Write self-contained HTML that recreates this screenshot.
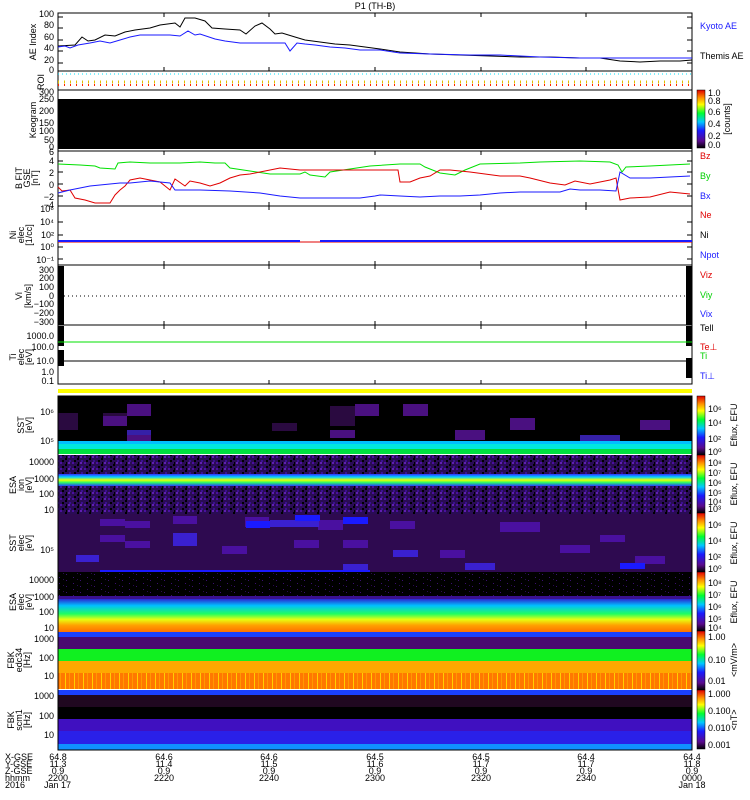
<!DOCTYPE html>
<html><head><meta charset="utf-8"><style>
html,body{margin:0;padding:0;background:#fff;}
svg{display:block;font-family:"Liberation Sans",sans-serif;}
text{font-size:9px;}
</style></head><body>
<svg width="750" height="800" viewBox="0 0 750 800" xmlns="http://www.w3.org/2000/svg">
<defs>
<linearGradient id="cb" x1="0" y1="1" x2="0" y2="0">
<stop offset="0" stop-color="#000"/><stop offset="0.12" stop-color="#5a0a8c"/><stop offset="0.3" stop-color="#1a1aff"/><stop offset="0.45" stop-color="#00c8ff"/><stop offset="0.6" stop-color="#00ff30"/><stop offset="0.75" stop-color="#ffff00"/><stop offset="0.87" stop-color="#ff8c00"/><stop offset="1" stop-color="#e00000"/>
</linearGradient>
<linearGradient id="esa2" x1="0" y1="0" x2="0" y2="1">
<stop offset="0" stop-color="#2a2ad0"/><stop offset="0.2" stop-color="#00c0ff"/><stop offset="0.45" stop-color="#20ff60"/><stop offset="0.62" stop-color="#e8ff10"/><stop offset="0.8" stop-color="#ffa000"/><stop offset="1" stop-color="#ff7000"/>
</linearGradient>
<linearGradient id="esa1" x1="0" y1="0" x2="0" y2="1">
<stop offset="0" stop-color="#3030ff"/><stop offset="0.25" stop-color="#00d0ff"/><stop offset="0.5" stop-color="#f0ff00"/><stop offset="0.7" stop-color="#30ff60"/><stop offset="1" stop-color="#2040ff"/>
</linearGradient>
<pattern id="noise" width="12" height="6" patternUnits="userSpaceOnUse">
<rect width="12" height="6" fill="#2a0c55"/><rect x="0" y="0" width="2" height="2" fill="#4a10a0"/><rect x="5" y="2" width="2" height="2" fill="#000"/><rect x="8" y="0" width="2" height="2" fill="#6020b0"/><rect x="2" y="4" width="2" height="2" fill="#000"/><rect x="9" y="4" width="2" height="2" fill="#3a1090"/><rect x="6" y="0" width="1" height="2" fill="#000"/>
</pattern>
<pattern id="noise2" width="14" height="6" patternUnits="userSpaceOnUse">
<rect width="14" height="6" fill="#000"/><rect x="3" y="1" width="1" height="1" fill="#3a1070"/><rect x="10" y="4" width="1" height="1" fill="#3a1070"/><rect x="7" y="3" width="1" height="1" fill="#2a0a50"/>
</pattern>
<pattern id="fbk" width="9" height="10" patternUnits="userSpaceOnUse">
<rect width="9" height="10" fill="#ff7800"/><rect x="2" width="1" height="10" fill="#ffd000"/><rect x="6" width="1" height="10" fill="#ff9a00"/>
</pattern>
</defs>

<text x="375" y="9" text-anchor="middle" font-size="10">P1  (TH-B)</text>

<!-- AE panel -->
<rect x="58" y="13" width="634" height="58" fill="#fff" stroke="#000"/>
<polyline fill="none" stroke="#000" points="58,46 75,45 82,37 88,41 95,40 105,35 115,36 125,32 135,30 150,28 160,25 175,23 180,27 185,18 195,18 205,21 212,28 225,29 240,30 246,34 255,26 262,23 270,29 275,34 282,33 295,37 305,40 320,42 335,44 350,45 365,47 380,49 400,52 430,54 460,55 490,56 520,57 550,57 580,58 600,58 620,61 640,62 660,61 680,61 692,60"/>
<polyline fill="none" stroke="#1a1aff" points="58,47 65,46 70,48 78,45 90,43 100,41 110,43 120,40 130,37 140,35 155,35 170,35 180,36 188,31 195,35 200,34 215,39 225,41 240,43 255,43 270,43 285,43 290,51 297,43 305,44 315,45 330,47 345,48 360,50 380,50 400,53 430,54 470,55 500,55 540,57 580,58 620,58 660,58 692,58"/>
<text x="54" y="17" text-anchor="end">100</text><text x="54" y="28" text-anchor="end">80</text><text x="54" y="40" text-anchor="end">60</text><text x="54" y="51" text-anchor="end">40</text><text x="54" y="63" text-anchor="end">20</text><text x="54" y="73" text-anchor="end">0</text>
<text transform="translate(36,42) rotate(-90)" text-anchor="middle">AE Index</text>
<text x="700" y="29" fill="#1a1aff">Kyoto AE</text>
<text x="700" y="59">Themis AE</text>

<!-- ROI -->
<rect x="58" y="71" width="634" height="19" fill="#fff" stroke="#000"/>
<line x1="58" y1="74" x2="692" y2="74" stroke="#00e0ff" stroke-dasharray="1,3"/>
<line x1="58" y1="82" x2="692" y2="82" stroke="#e0c000" stroke-width="3" stroke-dasharray="1,5"/>
<line x1="58" y1="85" x2="692" y2="85" stroke="#ff2000" stroke-width="2" stroke-dasharray="1,5"/>
<text transform="translate(44,82) rotate(-90)" text-anchor="middle">ROI</text>

<!-- Keogram -->
<rect x="58" y="90" width="634" height="61" fill="#fff" stroke="#000"/>
<rect x="58" y="99" width="634" height="50" fill="#000"/>
<text x="54" y="95" text-anchor="end">300</text><text x="54" y="102" text-anchor="end">250</text><text x="54" y="114" text-anchor="end">200</text><text x="54" y="126" text-anchor="end">150</text><text x="54" y="134" text-anchor="end">100</text><text x="54" y="143" text-anchor="end">50</text><text x="54" y="150" text-anchor="end">0</text>
<text transform="translate(36,120) rotate(-90)" text-anchor="middle">Keogram</text>
<rect x="697" y="90" width="8" height="58" fill="url(#cb)" stroke="#000" stroke-width="0.5"/>
<text x="708" y="96">1.0</text><text x="708" y="104">0.8</text><text x="708" y="115">0.6</text><text x="708" y="127">0.4</text><text x="708" y="139">0.2</text><text x="708" y="148">0.0</text>
<text transform="translate(730,119) rotate(-90)" text-anchor="middle" font-size="8">[counts]</text>

<!-- B panel -->
<rect x="58" y="151" width="634" height="55" fill="#fff" stroke="#000"/>
<polyline fill="none" stroke="#00e000" points="58,164 80,165 95,166 100,168 115,169 118,163 130,162 150,163 180,163 200,162 215,163 225,163 230,168 270,174 300,174 305,172 310,175 325,177 330,172 370,166 400,164 420,164 425,167 430,169 440,173 455,175 465,170 480,164 520,163 540,162 580,161 610,162 618,165 622,172 626,167 650,166 690,164"/>
<polyline fill="none" stroke="#e00000" points="58,187 62,191 70,190 75,198 85,200 95,203 110,203 115,195 120,190 125,186 130,180 140,178 150,180 160,182 170,190 175,179 185,186 190,181 200,183 210,186 220,183 230,178 240,175 250,174 260,172 280,168 300,170 320,170 340,170 360,170 375,170 398,170 400,182 410,182 420,178 430,176 440,170 450,170 470,172 500,176 520,176 530,178 550,183 565,185 575,181 590,184 600,182 610,180 616,178 620,200 630,198 650,197 670,192 690,194"/>
<polyline fill="none" stroke="#1a1aff" points="58,193 70,190 90,186 100,185 110,184 120,183 130,183 150,181 170,183 175,190 185,190 200,190 230,191 260,193 280,196 300,198 320,198 340,198 360,198 375,196 380,195 400,196 420,197 440,196 460,196 480,195 500,193 520,192 540,192 560,192 570,189 580,190 600,190 616,191 620,172 630,178 650,178 670,177 690,176"/>
<text x="54" y="155" text-anchor="end">6</text><text x="54" y="164" text-anchor="end">4</text><text x="54" y="176" text-anchor="end">2</text><text x="54" y="188" text-anchor="end">0</text><text x="54" y="200" text-anchor="end">−2</text><text x="54" y="208" text-anchor="end">−4</text>
<text transform="translate(22,178) rotate(-90)" text-anchor="middle" font-size="8">B FIT</text>
<text transform="translate(30,178) rotate(-90)" text-anchor="middle" font-size="8">GSE</text>
<text transform="translate(38,178) rotate(-90)" text-anchor="middle" font-size="8">[nT]</text>
<text x="700" y="159" fill="#e00000">Bz</text><text x="700" y="179" fill="#00d000">By</text><text x="700" y="199" fill="#1a1aff">Bx</text>

<!-- Ni panel -->
<rect x="58" y="206" width="634" height="59" fill="#fff" stroke="#000"/>
<line x1="58" y1="242" x2="692" y2="242" stroke="#e00000"/>
<line x1="58" y1="241" x2="300" y2="241" stroke="#1a1aff" stroke-width="2"/>
<line x1="320" y1="241" x2="692" y2="241" stroke="#1a1aff" stroke-width="2"/>
<text x="54" y="212" text-anchor="end">10⁶</text><text x="54" y="225" text-anchor="end">10⁴</text><text x="54" y="238" text-anchor="end">10²</text><text x="54" y="250" text-anchor="end">10⁰</text><text x="54" y="263" text-anchor="end">10⁻¹</text>
<text transform="translate(16,235) rotate(-90)" text-anchor="middle" font-size="8">Ni</text>
<text transform="translate(24,235) rotate(-90)" text-anchor="middle" font-size="8">elec</text>
<text transform="translate(32,235) rotate(-90)" text-anchor="middle" font-size="8">[1/cc]</text>
<text x="700" y="218" fill="#e00000">Ne</text><text x="700" y="238">Ni</text><text x="700" y="258" fill="#1a1aff">Npot</text>

<!-- Vi panel -->
<rect x="58" y="265" width="634" height="60" fill="#fff" stroke="#000"/>
<rect x="58" y="266" width="6" height="59" fill="#000"/>
<rect x="686" y="266" width="6" height="59" fill="#000"/>
<line x1="64" y1="296" x2="686" y2="296" stroke="#000" stroke-dasharray="1,3"/>
<text x="54" y="273" text-anchor="end">300</text><text x="54" y="281" text-anchor="end">200</text><text x="54" y="290" text-anchor="end">100</text><text x="54" y="299" text-anchor="end">0</text><text x="54" y="307" text-anchor="end">−100</text><text x="54" y="316" text-anchor="end">−200</text><text x="54" y="325" text-anchor="end">−300</text>
<text transform="translate(22,296) rotate(-90)" text-anchor="middle" font-size="8">Vi</text>
<text transform="translate(31,296) rotate(-90)" text-anchor="middle" font-size="8">[km/s]</text>
<text x="700" y="278" fill="#e00000">Viz</text><text x="700" y="298" fill="#00d000">Viy</text><text x="700" y="317" fill="#1a1aff">Vix</text>

<!-- Ti panel -->
<rect x="58" y="325" width="634" height="59" fill="#fff" stroke="#000"/>
<rect x="58" y="326" width="6" height="20" fill="#000"/><rect x="58" y="350" width="6" height="16" fill="#000"/>
<rect x="686" y="326" width="6" height="20" fill="#000"/><rect x="686" y="358" width="6" height="20" fill="#000"/>
<line x1="58" y1="342" x2="692" y2="342" stroke="#00e000"/>
<line x1="58" y1="361" x2="692" y2="361" stroke="#000"/>
<text x="54" y="339" text-anchor="end">1000.0</text><text x="54" y="350" text-anchor="end">100.0</text><text x="54" y="364" text-anchor="end">10.0</text><text x="54" y="375" text-anchor="end">1.0</text><text x="54" y="384" text-anchor="end">0.1</text>
<text transform="translate(16,357) rotate(-90)" text-anchor="middle" font-size="8">Ti</text>
<text transform="translate(24,357) rotate(-90)" text-anchor="middle" font-size="8">elec</text>
<text transform="translate(32,357) rotate(-90)" text-anchor="middle" font-size="8">[eV]</text>
<text x="700" y="331">Tell</text><text x="700" y="350" fill="#e00000">Te⊥</text><text x="700" y="359" fill="#00d000">Ti</text><text x="700" y="379" fill="#1a1aff">Ti⊥</text>

<!-- x ticks -->
<g stroke="#000">
<path d="M164,13v4M269,13v4M375,13v4M481,13v4M586,13v4M164,71v-4M269,71v-4M375,71v-4M481,71v-4M586,71v-4"/>
<path d="M164,151v4M269,151v4M375,151v4M481,151v4M586,151v4M164,206v-4M269,206v-4M375,206v-4M481,206v-4M586,206v-4"/>
<path d="M164,206v4M269,206v4M375,206v4M481,206v4M586,206v4M164,265v-4M269,265v-4M375,265v-4M481,265v-4M586,265v-4"/>
<path d="M164,265v4M269,265v4M375,265v4M481,265v4M586,265v4M164,325v-4M269,325v-4M375,325v-4M481,325v-4M586,325v-4"/>
<path d="M164,325v4M269,325v4M375,325v4M481,325v4M586,325v4M164,384v-4M269,384v-4M375,384v-4M481,384v-4M586,384v-4"/>
<path d="M58,17h5M58,28h5M58,40h5M58,51h5M58,63h5M687,17h5M687,28h5M687,40h5M687,51h5M687,63h5"/>
<path d="M58,161h5M58,172h5M58,184h5M58,196h5M687,161h5M687,172h5M687,184h5M687,196h5"/>
<path d="M58,222h5M58,235h5M58,247h5M58,259h5M687,222h5M687,235h5M687,247h5M687,259h5"/>
</g>

<!-- yellow bar -->
<rect x="58" y="389" width="634" height="4" fill="#ffff00"/>

<!-- SST1 -->
<rect x="58" y="396" width="634" height="58" fill="#000"/>
<g fill="#2a0a40">
<rect x="58" y="413" width="20" height="17"/><rect x="103" y="413" width="24" height="8"/><rect x="330" y="406" width="25" height="20"/><rect x="272" y="423" width="25" height="8"/>
</g>
<g fill="#4a1080">
<rect x="127" y="404" width="24" height="12"/><rect x="355" y="404" width="24" height="12"/><rect x="403" y="404" width="25" height="12"/><rect x="103" y="416" width="24" height="10"/><rect x="330" y="430" width="25" height="8"/><rect x="127" y="435" width="24" height="6"/><rect x="455" y="430" width="30" height="10"/><rect x="510" y="418" width="25" height="12"/><rect x="640" y="420" width="30" height="10"/>
</g>
<g fill="#3520a8"><rect x="127" y="430" width="24" height="5"/><rect x="580" y="435" width="40" height="6"/></g>
<rect x="58" y="441" width="634" height="5" fill="#00c0ff"/>
<rect x="58" y="444" width="634" height="5" fill="#00e8e0"/>
<rect x="58" y="449" width="634" height="5" fill="#00e040"/>
<text x="54" y="415" text-anchor="end">10⁶</text><text x="54" y="444" text-anchor="end">10⁵</text>
<text transform="translate(24,425) rotate(-90)" text-anchor="middle" font-size="8">SST</text>
<text transform="translate(32,425) rotate(-90)" text-anchor="middle" font-size="8">[eV]</text>

<!-- ESA1 -->
<rect x="58" y="455" width="634" height="59" fill="url(#noise)"/>
<rect x="58" y="474" width="634" height="12" fill="url(#esa1)"/>
<text x="54" y="465" text-anchor="end">10000</text><text x="54" y="482" text-anchor="end">1000</text><text x="54" y="497" text-anchor="end">100</text><text x="54" y="513" text-anchor="end">10</text>
<text transform="translate(16,485) rotate(-90)" text-anchor="middle" font-size="8">ESA</text>
<text transform="translate(24,485) rotate(-90)" text-anchor="middle" font-size="8">ion</text>
<text transform="translate(32,485) rotate(-90)" text-anchor="middle" font-size="8">[eV]</text>

<!-- SST2 -->
<rect x="58" y="514" width="634" height="58" fill="#2e0a50"/>
<g fill="#4a10a0">
<rect x="100" y="519" width="25" height="7"/><rect x="125" y="521" width="25" height="7"/><rect x="173" y="516" width="24" height="8"/><rect x="245" y="517" width="24" height="10"/><rect x="318" y="520" width="25" height="10"/><rect x="390" y="521" width="25" height="8"/><rect x="100" y="535" width="25" height="7"/><rect x="125" y="541" width="25" height="7"/><rect x="222" y="546" width="25" height="8"/><rect x="294" y="540" width="25" height="8"/><rect x="343" y="540" width="25" height="8"/><rect x="440" y="550" width="25" height="8"/><rect x="600" y="535" width="25" height="7"/><rect x="635" y="556" width="30" height="8"/><rect x="500" y="522" width="40" height="10"/><rect x="560" y="545" width="30" height="8"/>
</g>
<g fill="#3a20d0">
<rect x="173" y="533" width="24" height="13"/><rect x="270" y="520" width="25" height="7"/><rect x="76" y="555" width="23" height="7"/><rect x="294" y="520" width="25" height="7"/><rect x="393" y="550" width="25" height="7"/><rect x="465" y="563" width="30" height="7"/><rect x="343" y="564" width="25" height="6"/>
</g>
<g fill="#1a1aff"><rect x="246" y="521" width="24" height="7"/><rect x="295" y="515" width="25" height="6"/><rect x="343" y="517" width="25" height="7"/><rect x="620" y="563" width="25" height="6"/><rect x="100" y="570" width="270" height="2"/></g>
<text x="54" y="553" text-anchor="end">10⁵</text>
<text transform="translate(16,543) rotate(-90)" text-anchor="middle" font-size="8">SST</text>
<text transform="translate(24,543) rotate(-90)" text-anchor="middle" font-size="8">elec</text>
<text transform="translate(32,543) rotate(-90)" text-anchor="middle" font-size="8">[eV]</text>

<!-- ESA2 -->
<rect x="58" y="572" width="634" height="25" fill="url(#noise2)"/>
<rect x="58" y="596" width="634" height="3" fill="#3a1090"/>
<rect x="58" y="599" width="634" height="33" fill="url(#esa2)"/>
<text x="54" y="583" text-anchor="end">10000</text><text x="54" y="600" text-anchor="end">1000</text><text x="54" y="615" text-anchor="end">100</text><text x="54" y="631" text-anchor="end">10</text>
<text transform="translate(16,602) rotate(-90)" text-anchor="middle" font-size="8">ESA</text>
<text transform="translate(24,602) rotate(-90)" text-anchor="middle" font-size="8">elec</text>
<text transform="translate(32,602) rotate(-90)" text-anchor="middle" font-size="8">[eV]</text>

<!-- FBK1 -->
<rect x="58" y="632" width="634" height="5" fill="#1a40ff"/>
<rect x="58" y="637" width="634" height="12" fill="#4a0a70"/>
<rect x="58" y="649" width="634" height="12" fill="#10f020"/>
<rect x="58" y="661" width="634" height="12" fill="#ffa800"/>
<rect x="58" y="673" width="634" height="16" fill="url(#fbk)"/>
<text x="54" y="642" text-anchor="end">1000</text><text x="54" y="661" text-anchor="end">100</text><text x="54" y="679" text-anchor="end">10</text>
<text transform="translate(14,660) rotate(-90)" text-anchor="middle" font-size="8">FBK</text>
<text transform="translate(22,660) rotate(-90)" text-anchor="middle" font-size="8">edc34</text>
<text transform="translate(30,660) rotate(-90)" text-anchor="middle" font-size="8">[Hz]</text>

<!-- FBK2 -->
<rect x="58" y="690" width="634" height="5" fill="#1a40ff"/>
<rect x="58" y="695" width="634" height="12" fill="#200820"/>
<rect x="58" y="707" width="634" height="12" fill="#000"/>
<rect x="58" y="719" width="634" height="12" fill="#4010c0"/>
<rect x="58" y="731" width="634" height="13" fill="#2a20e8"/>
<rect x="58" y="744" width="634" height="6" fill="#1090ff"/>
<text x="54" y="699" text-anchor="end">1000</text><text x="54" y="719" text-anchor="end">100</text><text x="54" y="738" text-anchor="end">10</text>
<text transform="translate(14,720) rotate(-90)" text-anchor="middle" font-size="8">FBK</text>
<text transform="translate(22,720) rotate(-90)" text-anchor="middle" font-size="8">scm1</text>
<text transform="translate(30,720) rotate(-90)" text-anchor="middle" font-size="8">[Hz]</text>
<rect x="58" y="396" width="634" height="354" fill="none" stroke="#000"/>

<!-- colorbars -->
<g stroke="#000" stroke-width="0.5">
<rect x="697" y="396" width="8" height="59" fill="url(#cb)"/>
<rect x="697" y="455" width="8" height="58" fill="url(#cb)"/>
<rect x="697" y="513" width="8" height="59" fill="url(#cb)"/>
<rect x="697" y="572" width="8" height="59" fill="url(#cb)"/>
<rect x="697" y="631" width="8" height="59" fill="url(#cb)"/>
<rect x="697" y="690" width="8" height="59" fill="url(#cb)"/>
</g>
<g font-size="8">
<text x="708" y="412">10⁶</text><text x="708" y="426">10⁴</text><text x="708" y="442">10²</text><text x="708" y="455">10⁰</text>
<text x="708" y="466">10⁸</text><text x="708" y="476">10⁷</text><text x="708" y="486">10⁶</text><text x="708" y="496">10⁵</text><text x="708" y="505">10⁴</text><text x="708" y="512">10³</text>
<text x="708" y="528">10⁶</text><text x="708" y="544">10⁴</text><text x="708" y="560">10²</text><text x="708" y="572">10⁰</text>
<text x="708" y="586">10⁸</text><text x="708" y="598">10⁷</text><text x="708" y="610">10⁶</text><text x="708" y="622">10⁵</text><text x="708" y="631">10⁴</text>
<text x="708" y="640">1.00</text><text x="708" y="663">0.10</text><text x="708" y="684">0.01</text>
<text x="708" y="697">1.000</text><text x="708" y="714">0.100</text><text x="708" y="731">0.010</text><text x="708" y="748">0.001</text>
<text transform="translate(737,425) rotate(-90)" text-anchor="middle">Eflux, EFU</text>
<text transform="translate(737,484) rotate(-90)" text-anchor="middle">Eflux, EFU</text>
<text transform="translate(737,543) rotate(-90)" text-anchor="middle">Eflux, EFU</text>
<text transform="translate(737,602) rotate(-90)" text-anchor="middle">Eflux, EFU</text>
<text transform="translate(737,660) rotate(-90)" text-anchor="middle">&lt;mV/m&gt;</text>
<text transform="translate(737,720) rotate(-90)" text-anchor="middle">&lt;nT&gt;</text>
</g>

<!-- bottom labels -->
<g font-size="9">
<text x="5" y="760">X-GSE</text><text x="5" y="767">Y-GSE</text><text x="5" y="774">Z-GSE</text><text x="5" y="781">hhmm</text><text x="5" y="788">2016</text>
<g text-anchor="middle">
<text x="58" y="760">64.8</text><text x="58" y="767">11.3</text><text x="58" y="774">0.9</text><text x="58" y="781">2200</text>
<text x="164" y="760">64.6</text><text x="164" y="767">11.4</text><text x="164" y="774">0.9</text><text x="164" y="781">2220</text>
<text x="269" y="760">64.6</text><text x="269" y="767">11.5</text><text x="269" y="774">0.9</text><text x="269" y="781">2240</text>
<text x="375" y="760">64.5</text><text x="375" y="767">11.6</text><text x="375" y="774">0.9</text><text x="375" y="781">2300</text>
<text x="481" y="760">64.5</text><text x="481" y="767">11.7</text><text x="481" y="774">0.9</text><text x="481" y="781">2320</text>
<text x="586" y="760">64.4</text><text x="586" y="767">11.7</text><text x="586" y="774">0.9</text><text x="586" y="781">2340</text>
<text x="692" y="760">64.4</text><text x="692" y="767">11.8</text><text x="692" y="774">0.9</text><text x="692" y="781">0000</text><text x="692" y="788">Jan 18</text>
</g>
<text x="44" y="788">Jan 17</text>
</g>
</svg>
</body></html>
